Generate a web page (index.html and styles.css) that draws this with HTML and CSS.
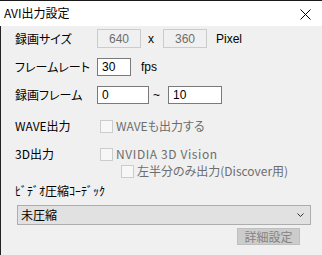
FILE: index.html
```html
<!DOCTYPE html>
<html lang="ja">
<head>
<meta charset="utf-8">
<link rel="stylesheet" href="styles.css">
</head>
<body>
<div class="win">
  <div class="titlebar">
    <span class="title">AVI出力設定</span>
    <span class="close"><svg width="11" height="11" viewBox="0 0 11 11"><path d="M0.5 0.5 L10.5 10.5 M10.5 0.5 L0.5 10.5" stroke="#000" stroke-width="1" fill="none"/></svg></span>
  </div>
  <div class="body">
    <div class="row r1">
      <span class="lbl">録画サイズ</span>
      <span class="edit dis w44">640</span>
      <span class="sep-x">x</span>
      <span class="edit dis w44">360</span>
      <span class="unit">Pixel</span>
    </div>
    <div class="row r2">
      <span class="lbl">フレームレート</span>
      <span class="edit w34">30</span>
      <span class="unit-fps">fps</span>
    </div>
    <div class="row r3">
      <span class="lbl">録画フレーム</span>
      <span class="edit w52">0</span>
      <span class="tilde">~</span>
      <span class="edit w54">10</span>
    </div>
    <div class="row r4">
      <span class="lbl">WAVE出力</span>
      <span class="chk"></span>
      <span class="dtext">WAVEも出力する</span>
    </div>
    <div class="row r5">
      <span class="lbl">3D出力</span>
      <span class="chk"></span>
      <span class="dtext wide">NVIDIA 3D Vision</span>
    </div>
    <div class="row r6">
      <span class="chk sub"></span>
      <span class="dtext">左半分のみ出力(Discover用)</span>
    </div>
    <div class="row r7">
      <span class="lbl-small">ﾋﾞﾃﾞｵ圧縮ｺｰﾃﾞｯｸ</span>
    </div>
    <div class="select">
      <span class="sel-text">未圧縮</span>
      <svg class="chev" width="7" height="4" viewBox="0 0 7 4"><path d="M0.5 0.5 L3.5 3.5 L6.5 0.5" stroke="#333" stroke-width="1" fill="none"/></svg>
    </div>
    <div class="btn-row">
      <span class="btn">詳細設定</span>
    </div>
  </div>
</div>
</body>
</html>
```

FILE: styles.css
```css
* { box-sizing: border-box; }
html, body {
  margin: 0;
  padding: 0;
  width: 322px;
  height: 255px;
  overflow: hidden;
  background: #f0f0f0;
}
body {
  font-family: "Noto Sans CJK JP", "Liberation Sans", sans-serif;
  font-size: 12px;
  color: #000;
  font-feature-settings: "palt";
}
.win {
  width: 322px;
  height: 255px;
  display: flex;
  flex-direction: column;
}
.titlebar {
  height: 26px;
  background: #fff;
  border-top: 1px solid #1a1a1a;
  display: flex;
  align-items: center;
  justify-content: space-between;
  padding-left: 4px;
}
.title {
  font-family: "Noto Sans CJK JP", sans-serif;
  font-size: 12px;
  line-height: 14px;
  margin-top: -1px;
}
.close {
  width: 46px;
  height: 25px;
  display: flex;
  align-items: center;
  justify-content: center;
  margin-right: -6px;
}
.close svg { display: block; margin-top: 1px; }
.body {
  flex: 1;
  border-left: 1px solid #222;
  padding-left: 14px;
  display: flex;
  flex-direction: column;
}
.row {
  display: flex;
  align-items: center;
}
.lbl {
  width: 82px;
  line-height: 14px;
  white-space: nowrap;
}
.r1 { margin-top: 3px; height: 19px; }
.r2 { margin-top: 10px; height: 18px; }
.r3 { margin-top: 10px; height: 18px; }
.r4 { margin-top: 15px; height: 14px; }
.r5 { margin-top: 14px; height: 14px; }
.r6 { margin-top: 3px; height: 14px; }
.r7 { margin-top: 7px; height: 12px; }
.edit {
  height: 100%;
  background: #fff;
  border: 1px solid #7a7a7a;
  font-family: "Liberation Sans", sans-serif;
  font-size: 12px;
  line-height: 16px;
  padding-left: 4px;
  display: flex;
  align-items: center;
}
.edit.dis {
  background: #f0f0f0;
  border-color: #cccccc;
  color: #6d6d6d;
  justify-content: center;
  padding-left: 0;
}
.w44 { width: 44px; }
.w34 { width: 34px; }
.w52 { width: 52px; }
.w54 { width: 54px; }
.sep-x {
  font-family: "Liberation Sans", sans-serif;
  margin-left: 7px;
  width: 15px;
}
.unit {
  font-family: "Liberation Sans", sans-serif;
  margin-left: 9px;
}
.unit-fps {
  font-family: "Liberation Sans", sans-serif;
  margin-left: 10px;
}
.tilde {
  font-family: "Liberation Sans", sans-serif;
  margin-left: 4px;
  width: 15px;
}
.chk {
  width: 13px;
  height: 13px;
  border: 1px solid #cccccc;
  background: #f7f7f7;
  margin-left: 3px;
}
.chk.sub { margin-left: 106px; }
.dtext {
  color: #6d6d6d;
  margin-left: 3px;
  white-space: nowrap;
  line-height: 14px;
}
.dtext.wide { letter-spacing: 0.6px; }
.lbl-small {
  font-size: 12px;
  line-height: 12px;
  white-space: nowrap;
}
.select {
  margin-top: 8px;
  margin-left: 2px;
  width: 294px;
  height: 20px;
  background: #e1e1e1;
  border: 1px solid #adadad;
  display: flex;
  align-items: center;
  justify-content: space-between;
  padding: 0 6px 0 3px;
}
.sel-text { line-height: 14px; }
.chev { display: block; }
.btn-row {
  display: flex;
  margin-top: 3px;
  padding-left: 222px;
}
.btn {
  width: 63px;
  height: 17px;
  background: #cccccc;
  border: 1px solid #bfbfbf;
  color: #838383;
  display: flex;
  align-items: center;
  justify-content: center;
  line-height: 14px;
}
```
